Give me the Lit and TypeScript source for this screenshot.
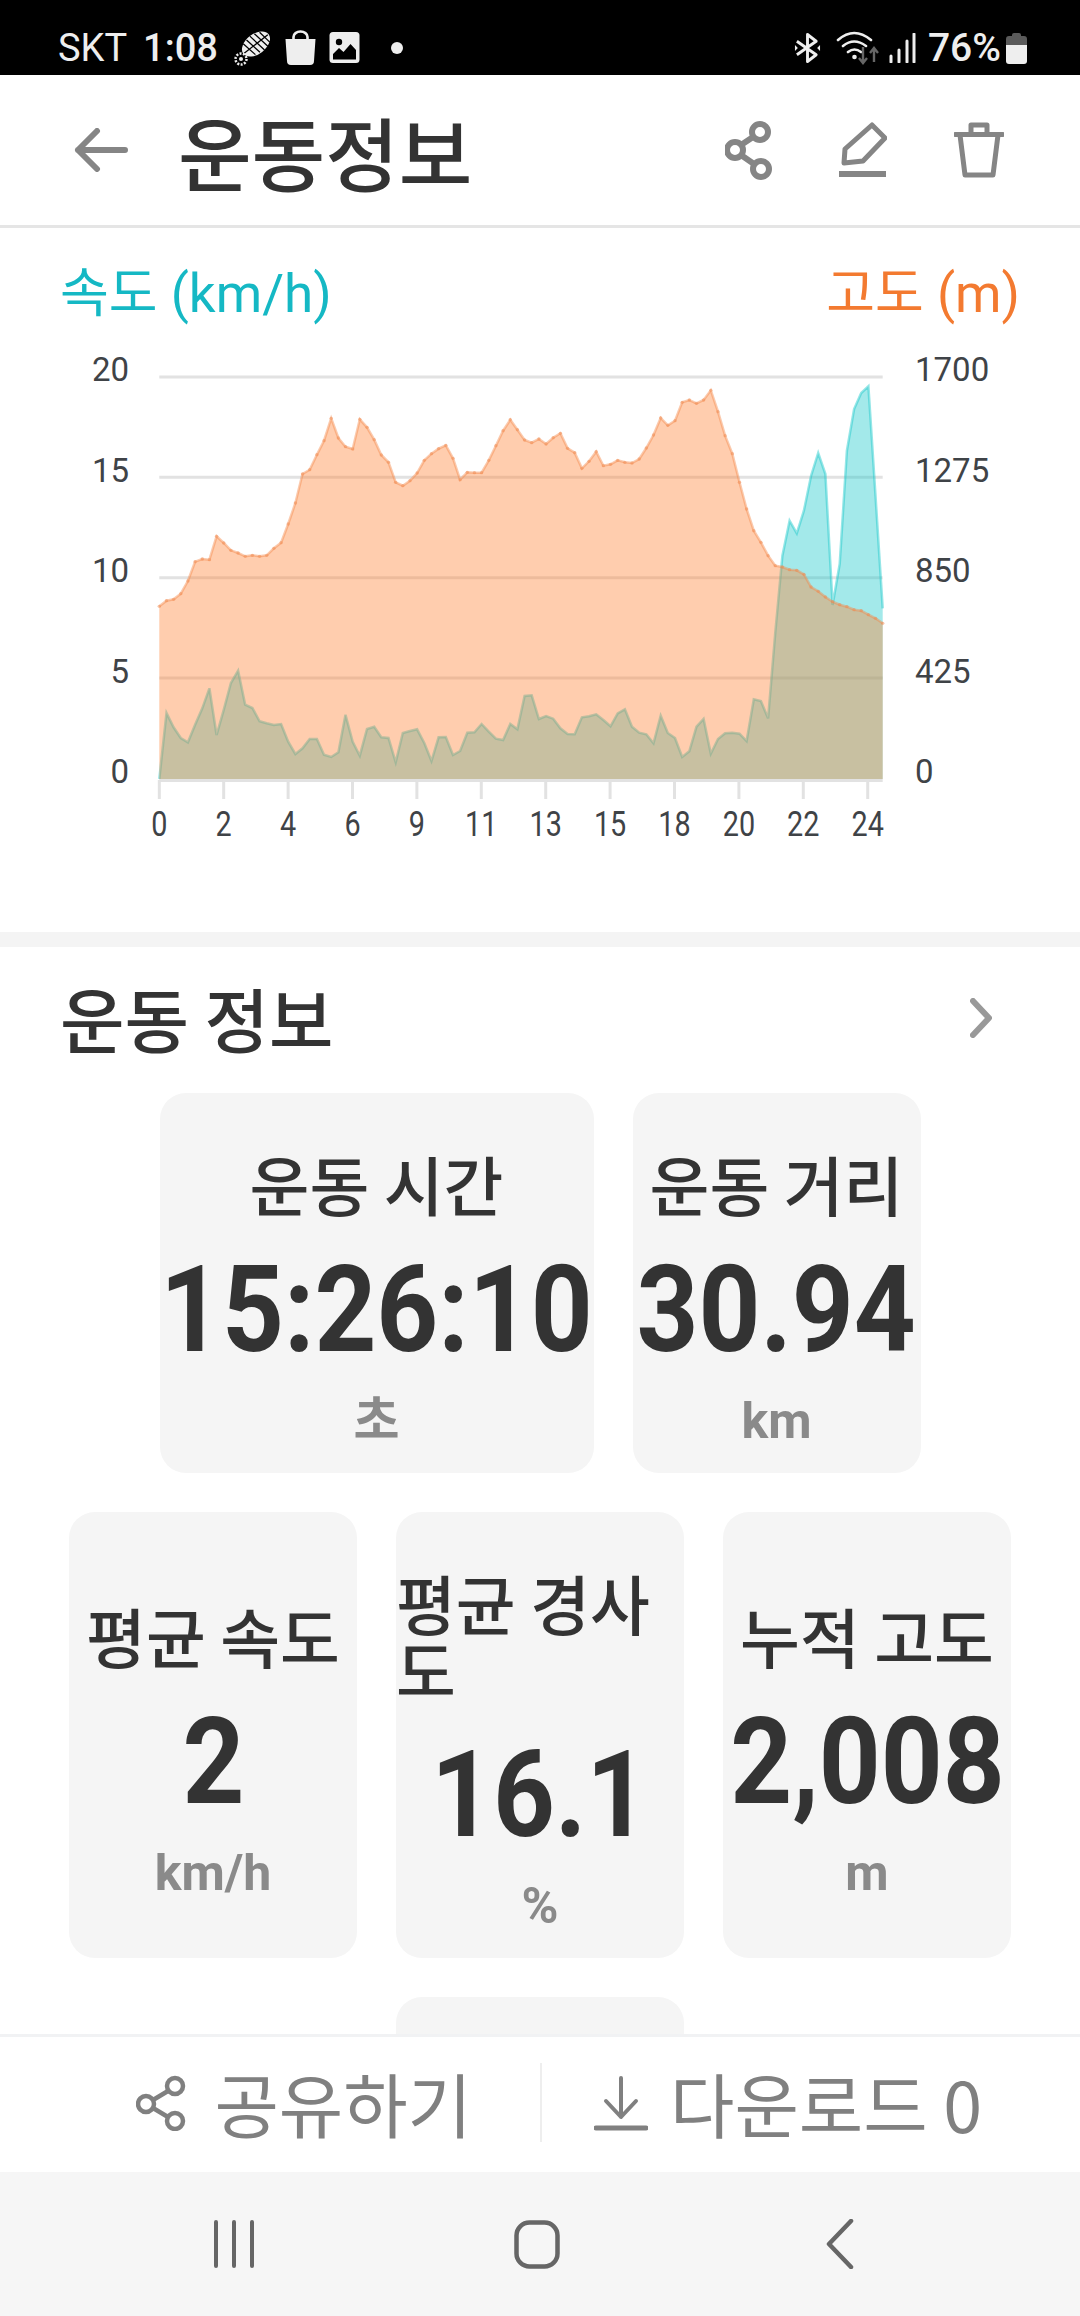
import { LitElement, html, css, svg } from 'lit'
import { customElement } from 'lit/decorators.js'

// series traced off the chart, one value every 7.16px, y in plot pixels x3 from y=340
const ALT = [
  802, 785, 781, 764, 726, 668, 660, 662, 592, 612, 634, 642, 652, 649, 652, 649, 628, 611, 555, 492,
  405, 392, 347, 305, 238, 297, 323, 330, 241, 265, 302, 348, 370, 430, 440, 425, 402, 364, 344, 329,
  319, 358, 422, 400, 401, 401, 364, 320, 275, 242, 272, 303, 311, 300, 315, 296, 283, 328, 341, 388,
  367, 338, 380, 376, 364, 370, 372, 360, 327, 288, 237, 259, 245, 190, 183, 193, 183, 154, 218, 290,
  344, 430, 510, 575, 610, 650, 680, 684, 692, 694, 706, 744, 757, 774, 788, 797, 803, 812, 815, 827,
  838, 853,
]
const SPEED = [
  1320, 1122, 1165, 1197, 1210, 1157, 1108, 1048, 1188, 1112, 1032, 995, 1097, 1107, 1147, 1153, 1158, 1155, 1208, 1245,
  1228, 1200, 1200, 1247, 1254, 1240, 1127, 1208, 1250, 1170, 1163, 1195, 1197, 1270, 1182, 1176, 1171, 1212, 1266, 1195,
  1194, 1248, 1236, 1181, 1180, 1155, 1178, 1199, 1203, 1155, 1171, 1071, 1069, 1140, 1131, 1139, 1168, 1185, 1186, 1135,
  1132, 1126, 1143, 1162, 1123, 1111, 1163, 1181, 1186, 1213, 1130, 1182, 1197, 1254, 1237, 1163, 1140, 1244, 1200, 1183,
  1181, 1184, 1206, 1081, 1086, 1138, 880, 650, 545, 583, 515, 410, 342, 405, 798, 675, 335, 210, 162, 142,
  470, 808,
]

const LEFT = 159.3
const RIGHT = 882.7
const BASE = 780
const px = (i: number) => LEFT + (i * (RIGHT - LEFT)) / 101
const py = (v: number) => 340 + v / 3
const line = (s: number[]) => s.map((v, i) => `${px(i).toFixed(1)},${py(v).toFixed(1)}`).join(' ')
const area = (s: number[]) => `${LEFT},${BASE} ${line(s)} ${RIGHT},${BASE}`

const GRID = [378, 478.3, 578.7, 679]
const Y_LEFT = ['20', '15', '10', '5', '0']
const Y_RIGHT = ['1700', '1275', '850', '425', '0']
const Y_BASE = [382, 483, 583, 684, 784]
const X_LABELS = ['0', '2', '4', '6', '9', '11', '13', '15', '18', '20', '22', '24']

const chart = svg`
  <svg class="chart" viewBox="0 340 1080 560" width="1080" height="560">
    ${GRID.map((y) => svg`<line x1=${LEFT} x2=${RIGHT} y1=${y} y2=${y} stroke="#e2e2e2" stroke-width="3"/>`)}
    <polygon points=${area(SPEED)} fill="#19c8ca" fill-opacity=".4"/>
    <polyline points=${line(SPEED)} fill="none" stroke="#19c8ca" stroke-opacity=".45" stroke-width="2.5"/>
    <polygon points=${area(ALT)} fill="#ff8234" fill-opacity=".4"/>
    <polyline points=${line(ALT)} fill="none" stroke="#f58a4b" stroke-opacity=".45" stroke-width="2.5"/>
    ${ALT.map((v, i) => svg`<circle cx=${px(i)} cy=${py(v)} r="1.7" fill="#f08a50" fill-opacity=".5"/>`)}
    <line x1=${LEFT} x2=${RIGHT} y1="781.5" y2="781.5" stroke="#e2e2e2" stroke-width="3"/>
    ${X_LABELS.map((t, i) => {
      const x = LEFT + i * 64.4
      return svg`
        <line x1=${x} x2=${x} y1="781" y2="800" stroke="#e2e2e2" stroke-width="3"/>
        <text class="tick xtick" text-anchor="middle" transform="translate(${x} 836.5) scale(.8 1)">${t}</text>`
    })}
    ${Y_LEFT.map((t, i) => svg`<text class="tick" x="129" y=${Y_BASE[i]} text-anchor="end">${t}</text>`)}
    ${Y_RIGHT.map((t, i) => svg`<text class="tick" x="915" y=${Y_BASE[i]}>${t}</text>`)}
  </svg>
`

const shoeIcon = svg`
  <svg class="ic" width="40" height="40" viewBox="0 0 40 40">
    <g transform="rotate(-38 24 16)">
      <ellipse cx="24" cy="16" rx="16" ry="10" fill="#eee"/>
      <path d="M9 16h30M14 8l3 16M19 7l3 18M24 6l3 20M29 7l3 18M34 9l2 14" stroke="#000" stroke-width="1.300" fill="none"/>
    </g>
    <circle cx="9" cy="31" r="5.500" fill="none" stroke="#eee" stroke-width="2.500" stroke-dasharray="2 1.400"/>
    <circle cx="9" cy="31" r="2" fill="#eee"/>
  </svg>`

const bagIcon = svg`
  <svg class="ic" width="33" height="36" viewBox="0 0 32 36">
    <path d="M1 9h30l-1.500 22a4 4 0 0 1-4 4h-19a4 4 0 0 1-4-4z" fill="#eee"/>
    <path d="M9 13V7a7 5.500 0 0 1 14 0v6" fill="none" stroke="#eee" stroke-width="2.600"/>
  </svg>`

const imageIcon = svg`
  <svg class="ic" width="31" height="31" viewBox="0 0 30 31">
    <rect width="30" height="31" rx="3.500" fill="#eee"/>
    <rect x="3.500" y="22" width="23" height="5.500" fill="#000"/>
    <circle cx="9.500" cy="10" r="3.200" fill="#000"/>
    <path d="M3.500 22l6-6 4.500 4 7-8 5.500 6v6h-23z" fill="#000"/>
  </svg>`

const btIcon = svg`
  <svg class="ic" width="27" height="32" viewBox="0 0 28 32">
    <path d="M3 9l20 14-9 7V2l9 7L3 23" fill="none" stroke="#eee" stroke-width="3" stroke-linejoin="round"/>
    <path d="M1 13v6l3-3zM27 13v6l-3-3z" fill="#eee"/>
  </svg>`

const wifiIcon = svg`
  <svg class="ic" width="44" height="34" viewBox="0 0 44 34">
    <path d="M2 9q16-14 33 0M7 15q11-9 23 0M12 21q6.500-5 13 0" fill="none" stroke="#eee" stroke-width="2.600" stroke-linecap="round"/>
    <circle cx="18.500" cy="26" r="2.300" fill="#eee"/>
    <path d="M27 16v15M23 27l4 5 4-5M38 31V17M34 22l4-5 4 5" fill="none" stroke="#666" stroke-width="2.400"/>
  </svg>`

const signalIcon = svg`
  <svg class="ic" width="27" height="30" viewBox="0 0 27 30">
    <path d="M2 29v-6M10 29V17M18 29V8M25 29V1" stroke="#eee" stroke-width="3" stroke-linecap="round"/>
  </svg>`

const batteryIcon = svg`
  <svg class="ic" width="21" height="32" viewBox="0 0 21 32">
    <path d="M6 3a2 2 0 0 1 2-2h5a2 2 0 0 1 2 2v1h3a3 3 0 0 1 3 3v6H0V7a3 3 0 0 1 3-3h3z" fill="#5a5a5a"/>
    <path d="M0 13h21v16a3 3 0 0 1-3 3H3a3 3 0 0 1-3-3z" fill="#eee"/>
  </svg>`

const shareIcon = svg`
  <svg width="47" height="59" viewBox="0 0 47 59" fill="none" stroke="#858585" stroke-width="6">
    <circle cx="35" cy="11" r="8"/><circle cx="10" cy="29" r="8"/><circle cx="36" cy="48" r="8"/>
    <path d="M28 16l-12 8M16 34l13 9"/>
  </svg>`

const editIcon = svg`
  <svg width="48" height="56" viewBox="0 0 48 56">
    <path d="M33 3l13 13-22 23-19 2 1-14z" fill="none" stroke="#858585" stroke-width="5" stroke-linejoin="round"/>
    <rect y="49" width="47" height="6" fill="#858585"/>
  </svg>`

const trashIcon = svg`
  <svg width="50" height="56" viewBox="0 0 50 56" fill="none" stroke="#858585" stroke-width="5" stroke-linejoin="round">
    <path d="M1 12.500h48" stroke-linecap="round"/>
    <path d="M17 12V3h16v9"/>
    <path d="M6 13l5 40h28l5-40"/>
  </svg>`

interface Metric {
  label: string
  value: string
  unit: string
  wide?: boolean
}

const METRICS: Metric[] = [
  { label: '운동 시간', value: '15:26:10', unit: '초', wide: true },
  { label: '운동 거리', value: '30.94', unit: 'km' },
  { label: '평균 속도', value: '2', unit: 'km/h' },
  { label: '평균 경사도', value: '16.1', unit: '%' },
  { label: '누적 고도', value: '2,008', unit: 'm' },
]

@customElement('app-root')
export class AppRoot extends LitElement {
  static styles = css`
    :host {
      display: flex;
      flex-direction: column;
      width: 1080px;
      height: 2316px;
      overflow: hidden;
      background: #fff;
      color: #333;
      font-family: Roboto, 'Noto Sans CJK KR', sans-serif;
    }
    .status {
      flex: none;
      height: 75px;
      box-sizing: border-box;
      padding: 20px 53px 0 58px;
      display: flex;
      align-items: center;
      background: #000;
      color: #eee;
      font-size: 38px;
    }
    .ic {
      display: block;
      flex: none;
    }
    .status-left {
      display: flex;
      align-items: center;
    }
    .carrier {
      margin-right: 16px;
    }
    .clock {
      font-weight: 500;
      margin-right: 14px;
    }
    .status-left .ic {
      margin-right: 12px;
    }
    .dot {
      width: 12px;
      height: 12px;
      border-radius: 50%;
      background: #eee;
      margin-left: 19px;
    }
    .status-right {
      margin-left: auto;
      display: flex;
      align-items: center;
    }
    .bt {
      margin-right: 15px;
    }
    .wf {
      margin-right: 9px;
    }
    .sg {
      margin-right: 12px;
    }
    .battery {
      font-weight: 500;
      font-size: 39px;
      margin-right: 5px;
    }
    .header {
      flex: none;
      height: 150px;
      box-sizing: border-box;
      display: flex;
      align-items: center;
      padding: 0 76px 0 74px;
    }
    .back {
      display: block;
      margin-right: 50px;
    }
    .title {
      font-family: 'Noto Sans CJK KR', sans-serif;
      font-size: 80px;
      font-weight: 500;
      line-height: 1;
      flex: 1;
    }
    .header-actions {
      display: flex;
      align-items: center;
      gap: 67px;
    }
    .header-actions svg {
      display: block;
    }
    .scroll {
      flex: 1;
      min-height: 0;
      overflow: hidden;
      border-top: 3px solid #e5e5e5;
    }
    .chart-head {
      display: flex;
      justify-content: space-between;
      padding: 34px 60px 0;
      height: 79px;
      font-size: 53px;
      font-weight: 400;
      line-height: 64px;
    }
    .speed {
      color: #15b8c4;
    }
    .alt {
      color: #f37a30;
    }
    .chart {
      display: block;
      margin-top: -2px;
    }
    .tick {
      font-size: 33px;
      fill: #3f4347;
      font-family: Roboto, sans-serif;
    }
    .xtick {
      font-size: 36px;
    }
    .gap {
      height: 15px;
      background: #f4f4f4;
      margin-top: 33px;
    }
    .info-head {
      display: flex;
      align-items: center;
      justify-content: space-between;
      height: 146px;
      box-sizing: border-box;
      padding: 0 88px 4px 60px;
    }
    .info-title {
      font-family: 'Noto Sans CJK KR', sans-serif;
      font-size: 70px;
      font-weight: 500;
      line-height: 1;
    }
    .cards {
      display: flex;
      flex-wrap: wrap;
      justify-content: center;
      gap: 39px;
    }
    .card {
      width: 288px;
      box-sizing: border-box;
      padding: 57px 0 22px;
      border-radius: 26px;
      background: #f5f5f5;
      display: flex;
      flex-direction: column;
      align-items: center;
      justify-content: center;
    }
    .card.wide {
      width: 434px;
    }
    .card.stub {
      height: 380px;
    }
    .label {
      font-family: 'Noto Sans CJK KR', sans-serif;
      font-size: 65px;
      font-weight: 500;
      line-height: 66px;
    }
    .value {
      font-family: Roboto, sans-serif;
      font-size: 120px;
      font-weight: 700;
      line-height: 110px;
      margin-top: 39px;
      white-space: nowrap;
      transform: scaleX(0.9);
    }
    .unit {
      font-family: Roboto, 'Noto Sans CJK KR', sans-serif;
      font-size: 50px;
      font-weight: 700;
      line-height: 60px;
      margin-top: 26px;
      color: #8a8a8a;
    }
    .actions {
      flex: none;
      height: 138px;
      box-sizing: border-box;
      border-top: 3px solid #f1f2f4;
      padding-bottom: 4px;
      display: flex;
      align-items: center;
      color: #808080;
      font-family: 'Noto Sans CJK KR', sans-serif;
      font-size: 70px;
      line-height: 1;
    }
    .action {
      display: flex;
      align-items: center;
    }
    .action.share {
      flex: none;
      width: 540px;
      box-sizing: border-box;
      justify-content: flex-end;
      padding-right: 68px;
      gap: 28px;
    }
    .action.download {
      flex: 1;
      min-width: 0;
      padding-left: 52px;
      gap: 22px;
    }
    .action svg {
      display: block;
    }
    .divider {
      flex: none;
      width: 2px;
      height: 79px;
      background: #eee;
    }
    .nav {
      flex: none;
      height: 144px;
      background: #f6f6f6;
      display: flex;
      align-items: center;
      justify-content: space-between;
      padding: 0 226px 0 213px;
    }
    .nav svg {
      display: block;
    }
    .nav .home {
      margin-right: 8px;
    }
  `

  private renderCard(m: Metric) {
    return html`
      <div class="card ${m.wide ? 'wide' : ''}">
        <div class="label">${m.label}</div>
        <div class="value">${m.value}</div>
        <div class="unit">${m.unit}</div>
      </div>
    `
  }

  render() {
    return html`
      <div class="status">
        <div class="status-left">
          <span class="carrier">SKT</span>
          <span class="clock">1:08</span>
          ${shoeIcon} ${bagIcon} ${imageIcon}
          <span class="dot"></span>
        </div>
        <div class="status-right">
          <span class="bt">${btIcon}</span>
          <span class="wf">${wifiIcon}</span>
          <span class="sg">${signalIcon}</span>
          <span class="battery">76%</span>
          ${batteryIcon}
        </div>
      </div>

      <div class="header">
        <svg class="back" width="54" height="44" viewBox="0 0 54 44" fill="none" stroke="#858585" stroke-width="6" stroke-linecap="round" stroke-linejoin="round">
          <path d="M51 22H4M23 3L4 22l19 19"/>
        </svg>
        <div class="title">운동정보</div>
        <div class="header-actions">${shareIcon} ${editIcon} ${trashIcon}</div>
      </div>

      <div class="scroll">
        <div class="chart-head">
          <span class="speed">속도 (km/h)</span>
          <span class="alt">고도 (m)</span>
        </div>
        ${chart}
        <div class="gap"></div>
        <div class="info-head">
          <div class="info-title">운동 정보</div>
          <svg width="22" height="40" viewBox="0 0 22 40" fill="none" stroke="#999" stroke-width="6" stroke-linecap="round" stroke-linejoin="round">
            <path d="M3 3l16 17L3 37"/>
          </svg>
        </div>
        <div class="cards">
          ${METRICS.map((m) => this.renderCard(m))}
          <div class="card stub"></div>
        </div>
      </div>

      <div class="actions">
        <div class="action share">
          <svg width="50" height="56" viewBox="0 0 50 56" fill="none" stroke="#808080" stroke-width="4.500">
            <circle cx="39" cy="11" r="8"/><circle cx="10" cy="29" r="8"/><circle cx="39" cy="46" r="8"/>
            <path d="M32 16l-15 9M17 33l15 9"/>
          </svg>
          <span>공유하기</span>
        </div>
        <div class="divider"></div>
        <div class="action download">
          <svg width="54" height="56" viewBox="0 0 54 56" fill="none" stroke="#808080" stroke-width="4" stroke-linecap="round" stroke-linejoin="round">
            <path d="M27 3v39M12 26l15 16 15-16"/>
            <path d="M2 53h50" stroke-width="5"/>
          </svg>
          <span>다운로드 0</span>
        </div>
      </div>

      <div class="nav">
        <svg width="42" height="48" viewBox="0 0 42 48" fill="none" stroke="#666" stroke-width="4" stroke-linecap="round">
          <path d="M3 2v44M21 2v44M39 2v44"/>
        </svg>
        <svg class="home" width="46" height="49" viewBox="0 0 46 49" fill="none" stroke="#666" stroke-width="4.500">
          <rect x="2.500" y="2.500" width="41" height="44" rx="13"/>
        </svg>
        <svg width="28" height="50" viewBox="0 0 28 50" fill="none" stroke="#666" stroke-width="4.500" stroke-linecap="round" stroke-linejoin="round">
          <path d="M25 2L3 25l22 23"/>
        </svg>
      </div>
    `
  }
}

declare global {
  interface HTMLElementTagNameMap {
    'app-root': AppRoot
  }
}
